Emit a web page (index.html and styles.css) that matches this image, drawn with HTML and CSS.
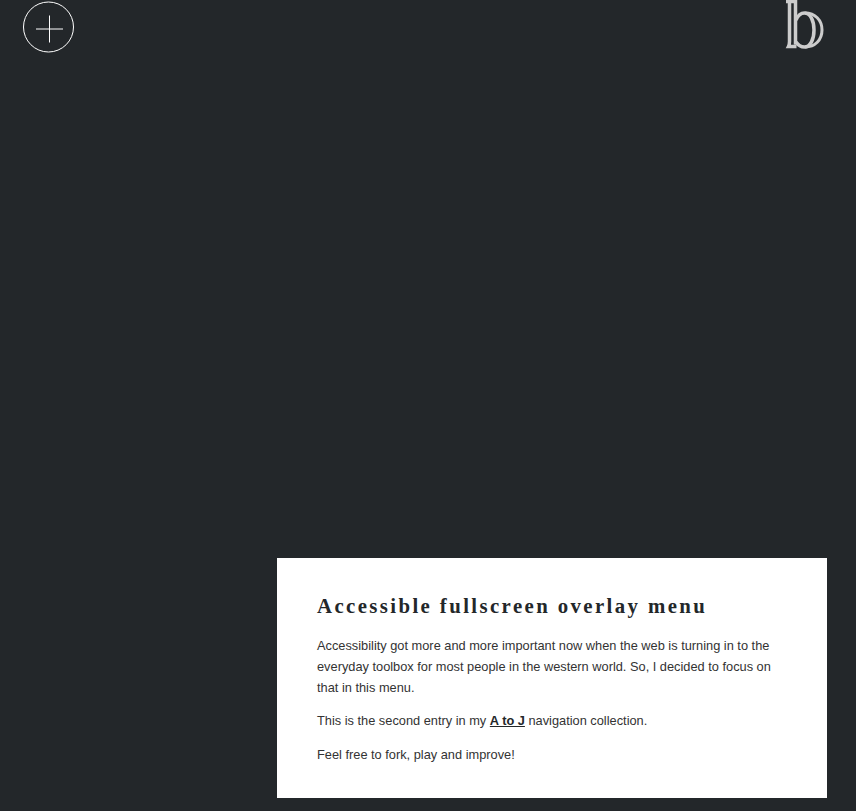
FILE: index.html
```html
<!DOCTYPE html>
<html lang="en">
<head>
    <meta charset="UTF-8">
    <meta name="viewport" content="width=device-width, initial-scale=1.0">
    <title>Accessible fullscreen overlay menu</title>
    <link rel="stylesheet" href="styles.css">
</head>
<body>
    <header class="top-bar">
        <button class="menu-toggle" aria-label="Open menu">
            <svg width="52" height="52" viewBox="0 0 52 52" fill="none" stroke="#fff">
                <circle cx="25.5" cy="26" r="25" />
                <path d="M26.5 14.5v27M13 28h27" />
            </svg>
        </button>
        <a class="logo" href="#" aria-label="Home">
            <svg width="40" height="50" viewBox="0 0 40 50" fill="none" stroke="#ccc" stroke-width="3.500">
                <path d="M1 1.500h9.500v43M4.500 1.500v40q0 3-1 5h8" />
                <path d="M11 20q3-7 8.500-7c6 0 9.500 8 9.500 17s-3.500 17-9.500 17c-4 0-6.500-2-8.500-5" />
                <path d="M20 13c10 0 17 7 17 17s-7 17-17 17" stroke-width="3" />
            </svg>
        </a>
    </header>
    <section class="intro">
        <h1>Accessible fullscreen overlay menu</h1>
        <p>Accessibility got more and more important now when the web is turning in to the everyday toolbox for most people in the western world. So, I decided to focus on that in this menu.</p>
        <p>This is the second entry in my <a href="#">A to J</a> navigation collection.</p>
        <p>Feel free to fork, play and improve!</p>
    </section>
</body>
</html>
```

FILE: styles.css
```css
/* page */
html, body {
    height: 100%;
}

body {
    margin: 0;
    background-color: #23272a;
    font-family: "Liberation Sans", Arial, sans-serif;
    font-size: 12.8px;
    line-height: 21px;
    color: #333;
    display: flex;
    flex-direction: column;
    justify-content: space-between;
}

/* top bar */
.top-bar {
    display: flex;
    justify-content: space-between;
    align-items: flex-start;
    padding: 1px 31px 0 23px;
}

.menu-toggle {
    display: block;
    padding: 0;
    border: none;
    background: none;
    cursor: pointer;
}

.menu-toggle svg,
.logo svg {
    display: block;
}

.logo {
    margin-top: -1px;
}

/* intro card */
.intro {
    align-self: flex-end;
    box-sizing: border-box;
    width: 550px;
    height: 240px;
    margin: 0 29px 13px 0;
    padding: 36px 40px 0;
    background-color: #fff;
}

.intro h1 {
    margin: 0 0 17px;
    font-family: "Liberation Serif", "Times New Roman", serif;
    font-size: 20.8px;
    line-height: 24px;
    letter-spacing: 2.4px;
    color: #23272a;
}

.intro p {
    margin: 0 0 12.4px;
}

.intro a {
    font-weight: bold;
    color: #23272a;
}
```
